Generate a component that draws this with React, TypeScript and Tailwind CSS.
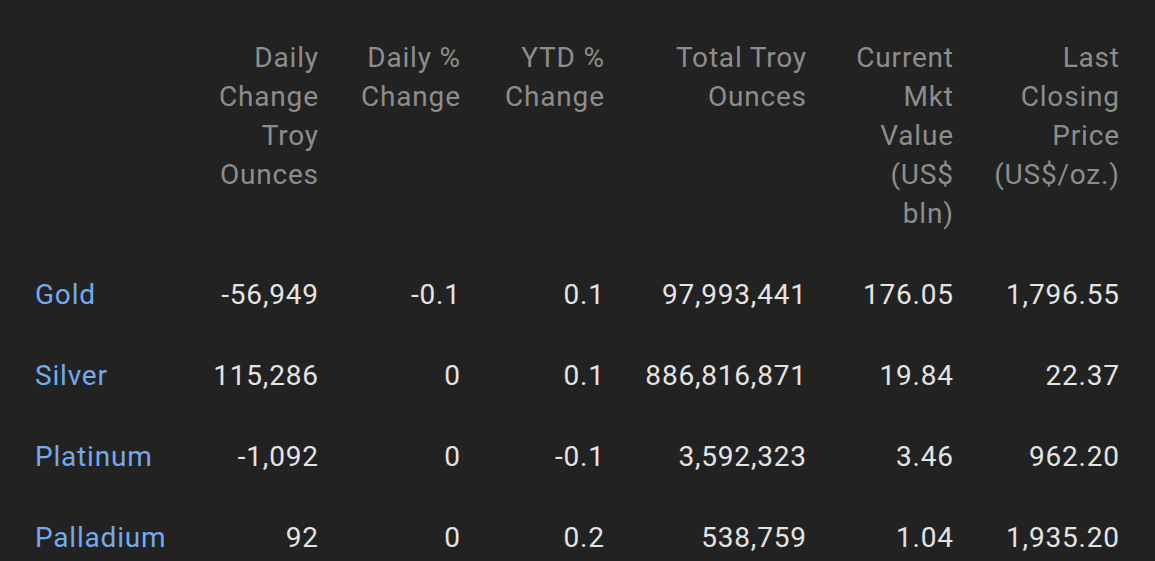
import React from "react";

const headers: string[][] = [
  [],
  ["Daily", "Change", "Troy", "Ounces"],
  ["Daily %", "Change"],
  ["YTD %", "Change"],
  ["Total Troy", "Ounces"],
  ["Current", "Mkt", "Value", "(US$", "bln)"],
  ["Last", "Closing", "Price", "(US$/oz.)"],
];

const rows: string[][] = [
  ["Gold", "-56,949", "-0.1", "0.1", "97,993,441", "176.05", "1,796.55"],
  ["Silver", "115,286", "0", "0.1", "886,816,871", "19.84", "22.37"],
  ["Platinum", "-1,092", "0", "-0.1", "3,592,323", "3.46", "962.20"],
  ["Palladium", "92", "0", "0.2", "538,759", "1.04", "1,935.20"],
];

const grid =
  "grid grid-cols-[35px_160px_123px_142px_144px_202px_147px_166px]";

export default function App() {
  return (
    <div
      className="w-[1155px] h-[561px] overflow-hidden bg-[#222222] text-[28px] leading-[39px] tracking-[0.8px]"
      style={{ fontFamily: "Roboto, 'Noto Sans', sans-serif" }}
    >
      <div className={`${grid} pt-[38px] pb-[21px] text-[#8d8d8d]`}>
        <div />
        {headers.map((h, i) => (
          <div key={i} className="flex flex-col items-end whitespace-nowrap">
            {h.map((l, j) => (
              <span key={j} className="mr-[-0.8px]">{l}</span>
            ))}
          </div>
        ))}
      </div>
      {rows.map((r, i) => (
        <div key={i} className={`${grid} py-[21px] text-[#e4e4e4]`}>
          <div />
          {r.map((c, j) =>
            j === 0 ? (
              <div key={j} className="text-[#74aaec] whitespace-nowrap">
                {c}
              </div>
            ) : (
              <div key={j} className="text-right whitespace-nowrap mr-[-0.8px]">
                {c}
              </div>
            )
          )}
        </div>
      ))}
    </div>
  );
}
